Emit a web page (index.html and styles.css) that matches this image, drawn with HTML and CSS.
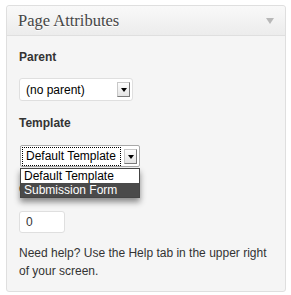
FILE: index.html
```html
<!DOCTYPE html>
<html lang="en">
<head>
  <meta charset="UTF-8">
  <title>Page Attributes</title>
  <link rel="stylesheet" href="styles.css">
</head>
<body>
  <div class="postbox">
    <div class="postbox-head">
      <h3 class="postbox-title">Page Attributes</h3>
      <span class="toggle-arrow"></span>
    </div>
    <div class="inside">
      <p class="field-label">Parent</p>
      <div class="select select-parent">
        <span class="select-value">(no parent)</span>
        <span class="select-button"><span class="caret"></span></span>
      </div>

      <p class="field-label">Template</p>
      <div class="select-wrap">
        <div class="select select-template">
          <span class="select-value focused">Default Template</span>
          <span class="select-button"><span class="caret"></span></span>
        </div>
        <ul class="dropdown">
          <li>Default Template</li>
          <li class="selected">Submission Form</li>
        </ul>
      </div>

      <p class="field-label">Order</p>
      <input class="order-input" type="text" value="0">

      <p class="help">Need help? Use the Help tab in the upper right of your screen.</p>
    </div>
  </div>
</body>
</html>
```

FILE: styles.css
```css
body { margin: 0; background: #fff; font-family: "Liberation Sans", Arial, sans-serif; color: #333; }
.postbox { width: 278px; margin: 5px 0 0 6px; background: #f5f5f5; border: 1px solid #dfdfdf; border-radius: 3px; }
.postbox-head { display: flex; align-items: center; justify-content: space-between; height: 29px; padding: 0 11px 0 11px; background: linear-gradient(to bottom, #f9f9f9, #ececec); border-bottom: 1px solid #dfdfdf; border-radius: 3px 3px 0 0; }
.postbox-title { margin: 0; font-family: "Liberation Serif", "Times New Roman", serif; font-weight: normal; font-size: 16.5px; color: #464646; text-shadow: 0 1px 0 #fff; }
.toggle-arrow { width: 0; height: 0; margin-top: 1px; border-left: 4px solid transparent; border-right: 4px solid transparent; border-top: 6px solid #b8b8b8; }
.inside { padding: 13px 12px 11px; }
.field-label { margin: 0; font-size: 12px; line-height: 16px; font-weight: bold; color: #333; }
.select { display: flex; align-items: center; justify-content: space-between; box-sizing: border-box; background: #fff; border: 1px solid #dfdfdf; border-radius: 3px; font-size: 12px; color: #000; }
.select-parent { width: 114px; height: 23px; margin: 13px 0 14px; padding: 0 2px 0 6px; }
.select-wrap { position: relative; margin: 14px 0 14px 1px; }
.select-template { width: 120px; height: 22px; padding: 1px 2px; border-color: #a9a9a9; border-radius: 2px; }
.select-value.focused { outline: 1px dotted #000; padding: 0 4px 0 3px; line-height: 17px; }
.select-button { display: flex; align-items: center; justify-content: center; box-sizing: border-box; width: 13px; height: 15px; background: linear-gradient(to bottom, #fdfdfd, #e4e4e4); border: 1px solid #c8c8c8; border-right-color: #7a7a7a; border-bottom-color: #7a7a7a; }
.caret { width: 0; height: 0; margin-top: 1px; border-left: 3px solid transparent; border-right: 3px solid transparent; border-top: 4px solid #000; }
.dropdown { position: absolute; top: 23px; left: 0; width: 120px; box-sizing: border-box; margin: 0; padding: 0; list-style: none; background: #fff; border: 1px solid #444; font-size: 12px; line-height: 14px; color: #000; box-shadow: 0 4px 6px rgba(0,0,0,0.45); }
.dropdown li { padding: 0 3px; }
.dropdown li.selected { background: #4a4a4a; color: #fff; }
.order-input { display: block; box-sizing: border-box; width: 46px; height: 22px; margin: 14px 0 0; padding: 0 6px; border: 1px solid #dfdfdf; border-radius: 3px; background: #fff; font-family: inherit; font-size: 12px; color: #333; }
.help { margin: 11px 0 0; font-size: 12px; line-height: 18px; color: #333; }
```
